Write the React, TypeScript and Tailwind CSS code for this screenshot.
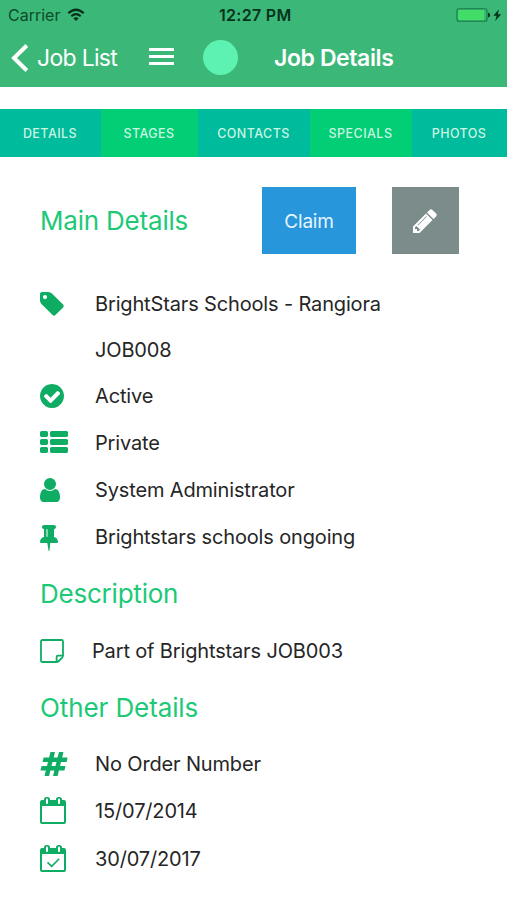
import type { ReactNode } from "react";

type Glyph = { box: string; width: string; d: string };

const glyphs: Record<string, Glyph> = {
  tag: {
    box: "128 0 1536 1792",
    width: "w-6",
    d: "M576 448q0-53-37.5-90.5t-90.5-37.5-90.5 37.5-37.5 90.5 37.5 90.5 90.5 37.5 90.5-37.5 37.5-90.5zm1067 576q0 53-37 90l-491 492q-39 37-91 37-53 0-90-37l-715-716q-38-37-64.5-101t-26.5-117v-416q0-52 38-90t90-38h416q53 0 117 26.5t102 64.5l715 714q37 39 37 91z",
  },
  check: {
    box: "128 0 1536 1792",
    width: "w-6",
    d: "M1412 734q0-28-18-46l-91-90q-19-19-45-19t-45 19l-408 407-226-226q-19-19-45-19t-45 19l-91 90q-18 18-18 46 0 27 18 45l362 362q19 19 45 19 27 0 46-19l543-543q18-18 18-45zm252 162q0 209-103 385.5t-279.5 279.5-385.5 103-385.5-103-279.5-279.5-103-385.5 103-385.5 279.5-279.5 385.5-103 385.5 103 279.5 279.5 103 385.5z",
  },
  list: {
    box: "0 0 1792 1792",
    width: "w-7",
    d: "M512 1248v192q0 40-28 68t-68 28h-320q-40 0-68-28t-28-68v-192q0-40 28-68t68-28h320q40 0 68 28t28 68zm0-512v192q0 40-28 68t-68 28h-320q-40 0-68-28t-28-68v-192q0-40 28-68t68-28h320q40 0 68 28t28 68zm1280 512v192q0 40-28 68t-68 28h-960q-40 0-68-28t-28-68v-192q0-40 28-68t68-28h960q40 0 68 28t28 68zm-1280-1024v192q0 40-28 68t-68 28h-320q-40 0-68-28t-28-68v-192q0-40 28-68t68-28h320q40 0 68 28t28 68zm1280 512v192q0 40-28 68t-68 28h-960q-40 0-68-28t-28-68v-192q0-40 28-68t68-28h960q40 0 68 28t28 68zm0-512v192q0 40-28 68t-68 28h-960q-40 0-68-28t-28-68v-192q0-40 28-68t68-28h960q40 0 68 28t28 68z",
  },
  user: {
    box: "256 0 1280 1792",
    width: "w-5",
    d: "M1536 1399q0 109-62.5 187t-150.5 78h-854q-88 0-150.5-78t-62.5-187q0-85 8.5-160.5t31.5-152 58.5-131 94-89 134.5-34.5q131 128 313 128t313-128q76 0 134.5 34.5t94 89 58.5 131 31.5 152 8.5 160.5zm-256-887q0 159-112.5 271.5t-271.5 112.5-271.5-112.5-112.5-271.5 112.5-271.5 271.5-112.5 271.5 112.5 112.5 271.5z",
  },
  pin: {
    box: "320 0 1152 1792",
    width: "w-[18px]",
    d: "M800 864v-448q0-14-9-23t-23-9-23 9-9 23v448q0 14 9 23t23 9 23-9 9-23zm672 352q0 26-19 45t-45 19h-429l-51 483q-2 12-10.5 20.5t-20.5 8.5h-1q-27 0-32-27l-76-485h-404q-26 0-45-19t-19-45q0-123 78.5-221.5t177.5-98.5v-512q-52 0-90-38t-38-90 38-90 90-38h640q52 0 90 38t38 90-38 90-90 38v512q99 0 177.5 98.5t78.5 221.5z",
  },
  hash: {
    box: "0 0 1792 1792",
    width: "w-7",
    d: "M991 1024l64-256h-254l-64 256h254zm768-504l-56 224q-7 24-31 24h-327l-64 256h311q15 0 25 12 10 14 6 28l-56 224q-5 24-31 24h-327l-81 328q-7 24-31 24h-224q-16 0-26-12-9-12-6-28l78-312h-254l-81 328q-7 24-31 24h-225q-15 0-25-12-9-12-6-28l78-312h-311q-15 0-25-12-9-12-6-28l56-224q7-24 31-24h327l64-256h-311q-15 0-25-12-10-14-6-28l56-224q5-24 31-24h327l81-328q7-24 32-24h224q15 0 25 12 9 12 6 28l-78 312h254l81-328q7-24 32-24h224q15 0 25 12 9 12 6 28l-78 312h311q15 0 25 12 9 12 6 28z",
  },
  pencil: {
    box: "128 0 1536 1792",
    width: "w-6",
    d: "M491 1536l91-91-235-235-91 91v107h128v128h107zm523-928q0-22-22-22-10 0-17 7l-542 542q-7 7-7 17 0 22 22 22 10 0 17-7l542-542q7-7 7-17zm-54-192l416 416-832 832h-416v-416zm683 96q0 53-37 90l-166 166-416-416 166-165q36-38 90-38 53 0 91 38l235 234q37 39 37 91z",
  },
};

function Icon({ name }: { name: string }) {
  const g = glyphs[name];
  return (
    <svg viewBox={g.box} className={`h-7 ${g.width}`} fill="currentColor">
      <path d={g.d} />
    </svg>
  );
}

function NoteIcon() {
  return (
    <svg viewBox="0 0 24 28" className="h-7 w-6" fill="none" stroke="currentColor" strokeWidth="1.8" strokeLinejoin="round">
      <path d="M2.5 3H21.5Q23 3 23 4.5V18.5Q23 19.8 22 20.8L18.8 24Q17.8 25 16.5 25H2.5Q1 25 1 23.5V4.5Q1 3 2.5 3Z" />
      <path d="M16.6 25V20.1Q16.6 18.6 18.1 18.6H23" />
    </svg>
  );
}

function CalendarIcon({ checked = false }: { checked?: boolean }) {
  return (
    <svg viewBox="0 0 26 28" className="mb-[2px] h-7 w-[26px]">
      <path
        fill="currentColor"
        fillRule="evenodd"
        d="M2 4H4V3.5A2.5 2.5 0 0 1 6.5 1H7.5A2.5 2.5 0 0 1 10 3.5V4H16V3.5A2.5 2.5 0 0 1 18.5 1H19.5A2.5 2.5 0 0 1 22 3.5V4H24A2 2 0 0 1 26 6V26A2 2 0 0 1 24 28H2A2 2 0 0 1 0 26V6A2 2 0 0 1 2 4ZM2 10V26H24V10ZM6 3.3V7.2Q6 8 7 8T8 7.2V3.3Q8 2.5 7 2.5T6 3.3ZM18 3.3V7.2Q18 8 19 8T20 7.2V3.3Q20 2.5 19 2.5T18 3.3Z"
      />
      {checked && <path d="M7.5 18.3L11.7 22.3L19.2 14.7" fill="none" stroke="currentColor" strokeWidth="1.6" />}
    </svg>
  );
}

function Row({ icon, height = "h-[47px]", indent = "w-[55px]", children }: {
  icon?: ReactNode;
  height?: string;
  indent?: string;
  children: ReactNode;
}) {
  return (
    <div className={`flex items-center ${height}`}>
      <div className={`shrink-0 text-[#0ead63] ${indent}`}>{icon}</div>
      <div className="whitespace-nowrap text-[20px] tracking-[-0.15px] text-[#262626]">{children}</div>
    </div>
  );
}

function Heading({ className, children }: { className: string; children: ReactNode }) {
  return (
    <h2 className={`flex items-center whitespace-nowrap text-[26px] font-normal text-[#1dc977] ${className}`}>
      {children}
    </h2>
  );
}

const tabs = [
  { label: "DETAILS", style: "w-[101px] bg-[#00bb9c]" },
  { label: "STAGES", style: "w-[97px] bg-[#02ce75]" },
  { label: "CONTACTS", style: "w-[112px] bg-[#00bb9c]" },
  { label: "SPECIALS", style: "w-[102px] bg-[#02ce75]" },
  { label: "PHOTOS", style: "w-[95px] bg-[#00bb9c]" },
];

export default function App() {
  return (
    <div className="h-[900px] w-[507px] overflow-hidden bg-white font-['Inter','Liberation_Sans',sans-serif]">
      <header className="h-[87px] bg-[#3bb878]">
        <div className="flex h-[30px] items-center pl-2 text-[#0d4b2b]">
          <span className="w-[58px] text-[16px]">Carrier</span>
          <svg viewBox="0 0 18 14" className="ml-[1px] h-[14px] w-[18px] text-[#07301a]" fill="none" stroke="currentColor" strokeWidth="2.2">
            <path d="M1.3 5.3Q9-1.8 16.7 5.3" />
            <path d="M4.3 8.3Q9 4 13.7 8.3" />
            <path d="M9 13L6.4 10.3Q9 8.3 11.6 10.3Z" fill="currentColor" stroke="none" />
          </svg>
          <span className="ml-[134px] w-[75px] whitespace-nowrap text-[16px] font-semibold tracking-[0.3px] text-[#06321b]">12:27 PM</span>
          <svg viewBox="0 0 46 14" className="ml-[162px] h-[14px] w-[46px]">
            <rect x="1" y="0.7" width="30" height="12.6" rx="2" fill="none" stroke="#167a43" strokeWidth="1.1" />
            <rect x="2" y="2" width="26" height="10" rx="1" fill="#42dc68" />
            <path d="M32 4.5Q34.2 5 34.2 7T32 9.5Z" fill="#06321b" />
            <path d="M43 1.2L37.3 7.7H40.6L39.2 13L45.2 6.2H41.8Z" fill="#06321b" />
          </svg>
        </div>
        <div className="flex h-[55px] items-center pl-[11px] text-white">
          <svg viewBox="0 0 18 28" className="h-7 w-[18px]" fill="none" stroke="currentColor" strokeWidth="4">
            <path d="M15.8 1.5L3 14L15.8 26.5" />
          </svg>
          <span className="ml-2 w-[112px] whitespace-nowrap pt-[2px] text-[23px] tracking-[-0.7px]">Job List</span>
          <span className="mb-[2px] flex w-[25px] flex-col gap-1">
            <i className="h-[3px] bg-white" />
            <i className="h-[3px] bg-white" />
            <i className="h-[3px] bg-white" />
          </span>
          <span className="ml-[29px] size-[35px] rounded-full bg-[#5df2b1]" />
          <span className="ml-9 whitespace-nowrap pt-[2px] text-[23px] font-semibold tracking-[-0.4px]">Job Details</span>
        </div>
      </header>

      <nav className="mt-[22px] flex h-12">
        {tabs.map((t) => (
          <div key={t.label} className={`flex items-center justify-center pr-px pt-[2px] text-[12.5px] font-medium tracking-[0.45px] text-[#c9f5e2] ${t.style}`}>
            {t.label}
          </div>
        ))}
      </nav>

      <main className="pl-10">
        <div className="flex h-[124px] items-start pt-[30px]">
          <Heading className="h-[67px] w-[222px] tracking-[-0.2px]">Main Details</Heading>
          <button className="h-[67px] w-[94px] bg-[#2796da] pt-[3px] text-[19px] tracking-[-0.2px] text-[#e6f5ff]">Claim</button>
          <button className="ml-[36px] flex h-[67px] w-[67px] items-center justify-center bg-[#7c8c8b] pr-[2px] text-white">
            <Icon name="pencil" />
          </button>
        </div>

        <Row icon={<Icon name="tag" />} height="h-[46px]">BrightStars Schools - Rangiora</Row>
        <Row height="h-[46px]">JOB008</Row>
        <Row icon={<Icon name="check" />} height="h-[46px]">Active</Row>
        <Row icon={<Icon name="list" />}>Private</Row>
        <Row icon={<Icon name="user" />}>System Administrator</Row>
        <Row icon={<Icon name="pin" />}>Brightstars schools ongoing</Row>

        <Heading className="h-[67px] tracking-[-0.22px]">Description</Heading>
        <Row icon={<NoteIcon />} indent="w-[52px]">Part of Brightstars JOB003</Row>

        <Heading className="h-[66px] tracking-[-0.1px]">Other Details</Heading>
        <Row icon={<Icon name="hash" />}>No Order Number</Row>
        <Row icon={<CalendarIcon />} height="h-12">15/07/2014</Row>
        <Row icon={<CalendarIcon checked />}>30/07/2017</Row>
      </main>
    </div>
  );
}
